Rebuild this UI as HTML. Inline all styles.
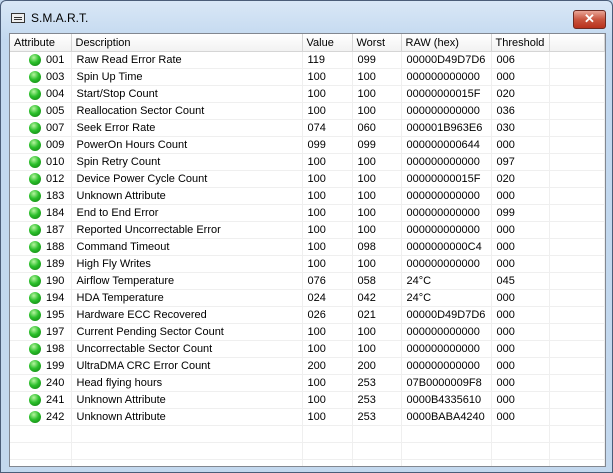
<!DOCTYPE html><html><head><style>
body{margin:0;width:613px;height:473px;overflow:hidden;background:#c3d8ee;font-family:"Liberation Sans",sans-serif;font-size:11px;color:#000}
.win{position:absolute;left:0;top:0;width:611px;height:471px;border:1px solid #4b5d78;border-radius:6px 6px 0 0;background:linear-gradient(#d9e7f6,#c2d8ef 40px,#c3d8ee)}
.title{position:absolute;left:30px;top:10px;font-size:12px;color:#000}
.ticon{position:absolute;left:10px;top:12px;width:12px;height:8px;border:1px solid #333;background:#eee}
.ticon:after{content:"";position:absolute;left:2px;top:3px;width:8px;height:1px;background:#333;box-shadow:0 2px 0 #333}
.close{position:absolute;left:572px;top:9px;width:31px;height:17px;border:1px solid #6b2a22;border-radius:3px;background:linear-gradient(#e9a596,#c9553f 50%,#b8321d);color:#fff;text-align:center;font-weight:bold;font-size:13px;line-height:16px}
.lv{position:absolute;left:8px;top:32px;width:595px;height:432px;border:1px solid #828790;background:#fff;overflow:hidden}
table{border-collapse:collapse;table-layout:fixed;width:595px}
th{height:17px;font-weight:normal;text-align:left;padding:0 0 0 4px;background:linear-gradient(#fff,#f2f2f2);border-right:1px solid #d5d5d5;border-bottom:1px solid #d5d5d5;white-space:nowrap}
td{height:16px;padding:0 0 0 5px;border-right:1px solid #efefef;border-bottom:1px solid #efefef;white-space:nowrap;overflow:hidden}
td.a{padding-left:18px;position:relative}
td.a i{position:absolute;left:19px;top:2px;width:12px;height:12px;border-radius:50%;background:radial-gradient(circle at 40% 30%,#b6f5a0,#2cc02c 45%,#0b7a0b)}
td.a span{margin-left:18px}
</style></head><body><div class="win">
<div class="ticon"></div><div class="title">S.M.A.R.T.</div><div class="close">✕</div>
<div class="lv"><table>
<colgroup><col style="width:61px"><col style="width:231px"><col style="width:50px"><col style="width:49px"><col style="width:90px"><col style="width:58px"><col></colgroup>
<tr><th>Attribute</th><th>Description</th><th>Value</th><th>Worst</th><th>RAW (hex)</th><th>Threshold</th><th></th></tr>
<tbody id="b">
<tr><td class="a"><i></i><span>001</span></td><td>Raw Read Error Rate</td><td>119</td><td>099</td><td>00000D49D7D6</td><td>006</td><td></td></tr>
<tr><td class="a"><i></i><span>003</span></td><td>Spin Up Time</td><td>100</td><td>100</td><td>000000000000</td><td>000</td><td></td></tr>
<tr><td class="a"><i></i><span>004</span></td><td>Start/Stop Count</td><td>100</td><td>100</td><td>00000000015F</td><td>020</td><td></td></tr>
<tr><td class="a"><i></i><span>005</span></td><td>Reallocation Sector Count</td><td>100</td><td>100</td><td>000000000000</td><td>036</td><td></td></tr>
<tr><td class="a"><i></i><span>007</span></td><td>Seek Error Rate</td><td>074</td><td>060</td><td>000001B963E6</td><td>030</td><td></td></tr>
<tr><td class="a"><i></i><span>009</span></td><td>PowerOn Hours Count</td><td>099</td><td>099</td><td>000000000644</td><td>000</td><td></td></tr>
<tr><td class="a"><i></i><span>010</span></td><td>Spin Retry Count</td><td>100</td><td>100</td><td>000000000000</td><td>097</td><td></td></tr>
<tr><td class="a"><i></i><span>012</span></td><td>Device Power Cycle Count</td><td>100</td><td>100</td><td>00000000015F</td><td>020</td><td></td></tr>
<tr><td class="a"><i></i><span>183</span></td><td>Unknown Attribute</td><td>100</td><td>100</td><td>000000000000</td><td>000</td><td></td></tr>
<tr><td class="a"><i></i><span>184</span></td><td>End to End Error</td><td>100</td><td>100</td><td>000000000000</td><td>099</td><td></td></tr>
<tr><td class="a"><i></i><span>187</span></td><td>Reported Uncorrectable Error</td><td>100</td><td>100</td><td>000000000000</td><td>000</td><td></td></tr>
<tr><td class="a"><i></i><span>188</span></td><td>Command Timeout</td><td>100</td><td>098</td><td>0000000000C4</td><td>000</td><td></td></tr>
<tr><td class="a"><i></i><span>189</span></td><td>High Fly Writes</td><td>100</td><td>100</td><td>000000000000</td><td>000</td><td></td></tr>
<tr><td class="a"><i></i><span>190</span></td><td>Airflow Temperature</td><td>076</td><td>058</td><td>24°C</td><td>045</td><td></td></tr>
<tr><td class="a"><i></i><span>194</span></td><td>HDA Temperature</td><td>024</td><td>042</td><td>24°C</td><td>000</td><td></td></tr>
<tr><td class="a"><i></i><span>195</span></td><td>Hardware ECC Recovered</td><td>026</td><td>021</td><td>00000D49D7D6</td><td>000</td><td></td></tr>
<tr><td class="a"><i></i><span>197</span></td><td>Current Pending Sector Count</td><td>100</td><td>100</td><td>000000000000</td><td>000</td><td></td></tr>
<tr><td class="a"><i></i><span>198</span></td><td>Uncorrectable Sector Count</td><td>100</td><td>100</td><td>000000000000</td><td>000</td><td></td></tr>
<tr><td class="a"><i></i><span>199</span></td><td>UltraDMA CRC Error Count</td><td>200</td><td>200</td><td>000000000000</td><td>000</td><td></td></tr>
<tr><td class="a"><i></i><span>240</span></td><td>Head flying hours</td><td>100</td><td>253</td><td>07B0000009F8</td><td>000</td><td></td></tr>
<tr><td class="a"><i></i><span>241</span></td><td>Unknown Attribute</td><td>100</td><td>253</td><td>0000B4335610</td><td>000</td><td></td></tr>
<tr><td class="a"><i></i><span>242</span></td><td>Unknown Attribute</td><td>100</td><td>253</td><td>0000BABA4240</td><td>000</td><td></td></tr>
<tr><td></td><td></td><td></td><td></td><td></td><td></td><td></td></tr>
<tr><td></td><td></td><td></td><td></td><td></td><td></td><td></td></tr>
<tr><td></td><td></td><td></td><td></td><td></td><td></td><td></td></tr>
</tbody></table></div></div></body></html>
